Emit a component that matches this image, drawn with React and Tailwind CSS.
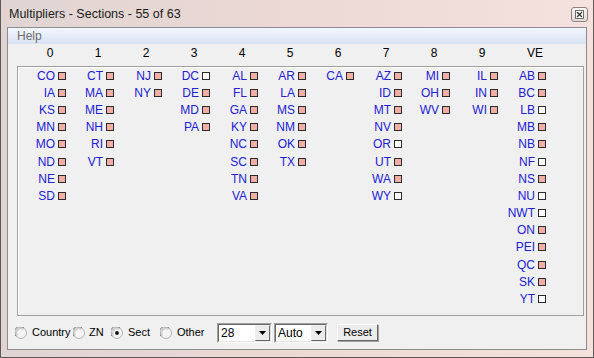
import React from 'react';

const columns = [
  { head: '0', items: ['CO', 'IA', 'KS', 'MN', 'MO', 'ND', 'NE', 'SD'] },
  { head: '1', items: ['CT', 'MA', 'ME', 'NH', 'RI', 'VT'] },
  { head: '2', items: ['NJ', 'NY'] },
  { head: '3', items: ['DC', 'DE', 'MD', 'PA'] },
  { head: '4', items: ['AL', 'FL', 'GA', 'KY', 'NC', 'SC', 'TN', 'VA'] },
  { head: '5', items: ['AR', 'LA', 'MS', 'NM', 'OK', 'TX'] },
  { head: '6', items: ['CA'] },
  { head: '7', items: ['AZ', 'ID', 'MT', 'NV', 'OR', 'UT', 'WA', 'WY'] },
  { head: '8', items: ['MI', 'OH', 'WV'] },
  { head: '9', items: ['IL', 'IN', 'WI'] },
  { head: 'VE', items: ['AB', 'BC', 'LB', 'MB', 'NB', 'NF', 'NS', 'NU', 'NWT', 'ON', 'PEI', 'QC', 'SK', 'YT'] },
];

// sections still missing -> white box
const open = new Set(['DC', 'OR', 'WY', 'LB', 'NF', 'NU', 'NWT', 'YT']);

const Radio = ({ checked }) => (
  <svg width="12" height="12" viewBox="0 0 12 12" className="shrink-0">
    <circle cx="6" cy="6" r="5.5" fill="#f4f4f4" stroke="#b4b4b4" strokeWidth="1" />
    <path d="M1.1 9.2 A5.5 5.5 0 0 1 9.2 1.1" fill="none" stroke="#7e7e7e" strokeWidth="1" />
    <path d="M2.3 8.2 A4.3 4.3 0 0 1 8.2 2.3" fill="none" stroke="#c4c4c4" strokeWidth="1" />
    {checked && <circle cx="6" cy="6" r="1.9" fill="#111" />}
  </svg>
);

const Combo = ({ value, width }) => (
  <div className={`flex h-[20px] ${width} border border-t-[#a0a0a0] border-l-[#a0a0a0] border-b-white border-r-white`}>
    <div className="flex flex-1 border border-t-[#696969] border-l-[#696969] border-b-[#e3e3e3] border-r-[#e3e3e3] bg-white">
      <span className="flex-1 pl-[2px] text-[12px] leading-[16px] text-black">{value}</span>
      <div className="flex w-[15px] items-center justify-center border border-t-[#f0f0f0] border-l-[#f0f0f0] border-b-[#696969] border-r-[#696969] bg-[#ececec]">
        <svg width="7" height="4" viewBox="0 0 7 4"><path d="M0 0h7L3.5 4z" fill="#000" /></svg>
      </div>
    </div>
  </div>
);

export default function App() {
  return (
    <div className="flex h-[358px] w-[594px] flex-col border-x border-b border-[#5d5756] bg-gradient-to-r from-[#e0d5d3] via-[#ecd8d4] to-[#f5e1dd] font-['Liberation_Sans',Arial,sans-serif] px-[6px] pb-[7px]">
      {/* title bar */}
      <div className="flex h-[27px] items-center justify-between pl-[2px]">
        <span className="pt-[1px] text-[12.5px] text-[#1b1b1b]">Multipliers - Sections - 55 of 63</span>
        <div className="mr-[-1px] mt-[2px] flex h-[15px] w-[17px] items-center justify-center rounded-[3px] border border-[#8c8280] bg-gradient-to-b from-[#fbf6f5] to-[#e4dad8]">
          <svg width="9" height="9" viewBox="0 0 9 9">
            <rect x="0.5" y="0.5" width="8" height="8" fill="#fff" stroke="#6f6f6f" />
            <path d="M2 2l5 5M7 2l-5 5" stroke="#333" strokeWidth="1.3" />
          </svg>
        </div>
      </div>

      {/* client */}
      <div className="flex flex-1 flex-col border border-[#8d8d8d] bg-[#f0f0f0]">
        <div className="flex h-[16px] items-center bg-gradient-to-b from-[#f3f6fc] to-[#d9e2f3] pl-[9px] text-[12px] text-[#6d6d6d]">
          Help
        </div>

        {/* column heads */}
        <div className="flex h-[18px] items-center pl-[18px] text-[12px] text-black">
          {columns.map((c) => (
            <div key={c.head} className={`w-[48px] text-center ${c.head === 'VE' ? 'pl-[10px]' : ''}`}>{c.head}</div>
          ))}
        </div>

        {/* section grid */}
        <div className="ml-[9px] mt-[4px] flex h-[250px] w-[567px] border border-[#a0a0a0] shadow-[inset_1px_1px_0_#ffffff]">
          {columns.map((c) => (
            <div key={c.head} className="flex w-[48px] flex-col">
              {c.items.map((s) => (
                <div key={s} className="flex h-[17.2px] items-center justify-end gap-[3px]">
                  <span className="text-[12px] leading-none text-[#2020d4]">{s}</span>
                  <span className={`h-[8px] w-[8px] border border-[#2b2b2b] ${open.has(s) ? 'bg-white' : 'bg-[#f0b0a8]'}`} />
                </div>
              ))}
            </div>
          ))}
        </div>

        {/* bottom controls */}
        <div className="flex flex-1 items-center pl-[7px] text-[11px] text-black">
          <label className="flex w-[58px] items-center gap-[5px]"><Radio />Country</label>
          <label className="flex w-[38px] items-center gap-[4px]"><Radio />ZN</label>
          <label className="flex w-[49px] items-center gap-[5px]"><Radio checked />Sect</label>
          <label className="flex w-[57px] items-center gap-[5px]"><Radio />Other</label>
          <Combo value="28" width="w-[55px]" />
          <div className="w-[2px]" />
          <Combo value="Auto" width="w-[54px]" />
          <button className="ml-[9px] h-[17px] w-[41px] border border-t-white border-l-white border-b-[#696969] border-r-[#696969] bg-[#ececec] text-[11px] leading-none text-black shadow-[1px_1px_0_#a0a0a0]">
            Reset
          </button>
        </div>
      </div>
    </div>
  );
}
